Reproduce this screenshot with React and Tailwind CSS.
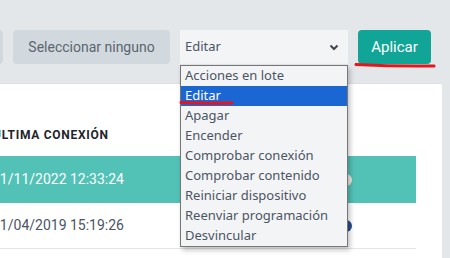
import React, { useState } from "react";

const ACTIONS = [
  "Acciones en lote",
  "Editar",
  "Apagar",
  "Encender",
  "Comprobar conexión",
  "Comprobar contenido",
  "Reiniciar dispositivo",
  "Reenviar programación",
  "Desvincular",
];

const ROWS = [
  { id: 1, lastSeen: "21/11/2022 12:33:24", active: true },
  { id: 2, lastSeen: "21/04/2019 15:19:26", active: false },
];

export default function App() {
  const [action, setAction] = useState("Editar");
  const [open, setOpen] = useState(true);

  return (
    <div className="relative h-[258px] w-[450px] overflow-hidden bg-[#e4e7ea] font-['Roboto','Liberation_Sans',sans-serif]">
      {/* Toolbar */}
      <div className="flex h-[83px] items-start gap-[10px] pt-[30px]">
        <button className="-ml-[60px] h-[34px] w-[63px] shrink-0 rounded bg-[#d2d9de]" />
        <button className="h-[34px] w-[157px] shrink-0 rounded bg-[#d2d9de] text-[14px] text-[#5b6570]">
          Seleccionar ninguno
        </button>
        <div
          onClick={() => setOpen(!open)}
          className="flex h-[34px] w-[168px] shrink-0 items-center justify-between bg-[#f3f4f6] pl-[5px] pr-[9px] font-['Noto_Sans',sans-serif] text-[13px] text-[#4b5563]"
        >
          <span>{action}</span>
          <svg width="10" height="7" viewBox="0 0 10 7">
            <path d="M1.5 1.5 L5 5 L8.5 1.5" fill="none" stroke="#3f4650" strokeWidth="2" />
          </svg>
        </div>
        <button className="h-[34px] w-[73px] shrink-0 rounded bg-[#10a596] text-[15px] text-white">
          Aplicar
        </button>
      </div>

      {/* Card with the device table */}
      <div className="-ml-[30px] h-[175px] w-[472px] border-t border-[#dde1e5] bg-white pl-[16px] pr-[26px] pt-[29px]">
        <div className="flex h-[43px] items-center pl-[7px] text-[12px] font-bold tracking-[0.06em] text-[#212529]">
          ÚLTIMA CONEXIÓN
        </div>
        {ROWS.map((r) => (
          <div
            key={r.id}
            className={`relative flex items-center pl-[6px] text-[14px] ${
              r.active
                ? "h-[47px] bg-[#52c1b6] text-white"
                : "h-[46px] border-b border-[#e3e6ea] text-[#4b5563]"
            }`}
          >
            {r.lastSeen}
            <span
              className={`absolute left-[354px] top-1/2 h-[12px] w-[12px] -translate-y-1/2 rounded-full ${
                r.active ? "bg-[#ece6dc]" : "bg-[#2b4c8c]"
              }`}
            />
          </div>
        ))}
      </div>

      <div className="absolute right-0 top-[83px] h-[175px] w-[8px] bg-[#e4e7ea]" />

      {/* Native-looking option list */}
      {open && (
        <ul className="absolute left-[180px] top-[65px] w-[168px] border border-[#767676] bg-[#f3f4f6] font-['Noto_Sans',sans-serif] text-[13px] text-[#4b5563] shadow-[2px_3px_5px_rgba(0,0,0,0.25)]">
          {ACTIONS.map((a) => (
            <li
              key={a}
              onClick={() => {
                setAction(a);
                setOpen(false);
              }}
              className={`flex h-[20px] items-center pl-[4px] ${
                a === action ? "bg-[#1a66d2] text-white" : ""
              }`}
            >
              {a}
            </li>
          ))}
        </ul>
      )}

      {/* Red marker strokes */}
      <svg className="pointer-events-none absolute left-0 top-0" width="450" height="258">
        <path d="M356 64.5 Q395 66.5 434 66" fill="none" stroke="#e8141c" strokeWidth="3" strokeLinecap="round" />
        <path d="M181 102.5 Q205 103.5 232 103" fill="none" stroke="#e8141c" strokeWidth="3" strokeLinecap="round" />
      </svg>
    </div>
  );
}
